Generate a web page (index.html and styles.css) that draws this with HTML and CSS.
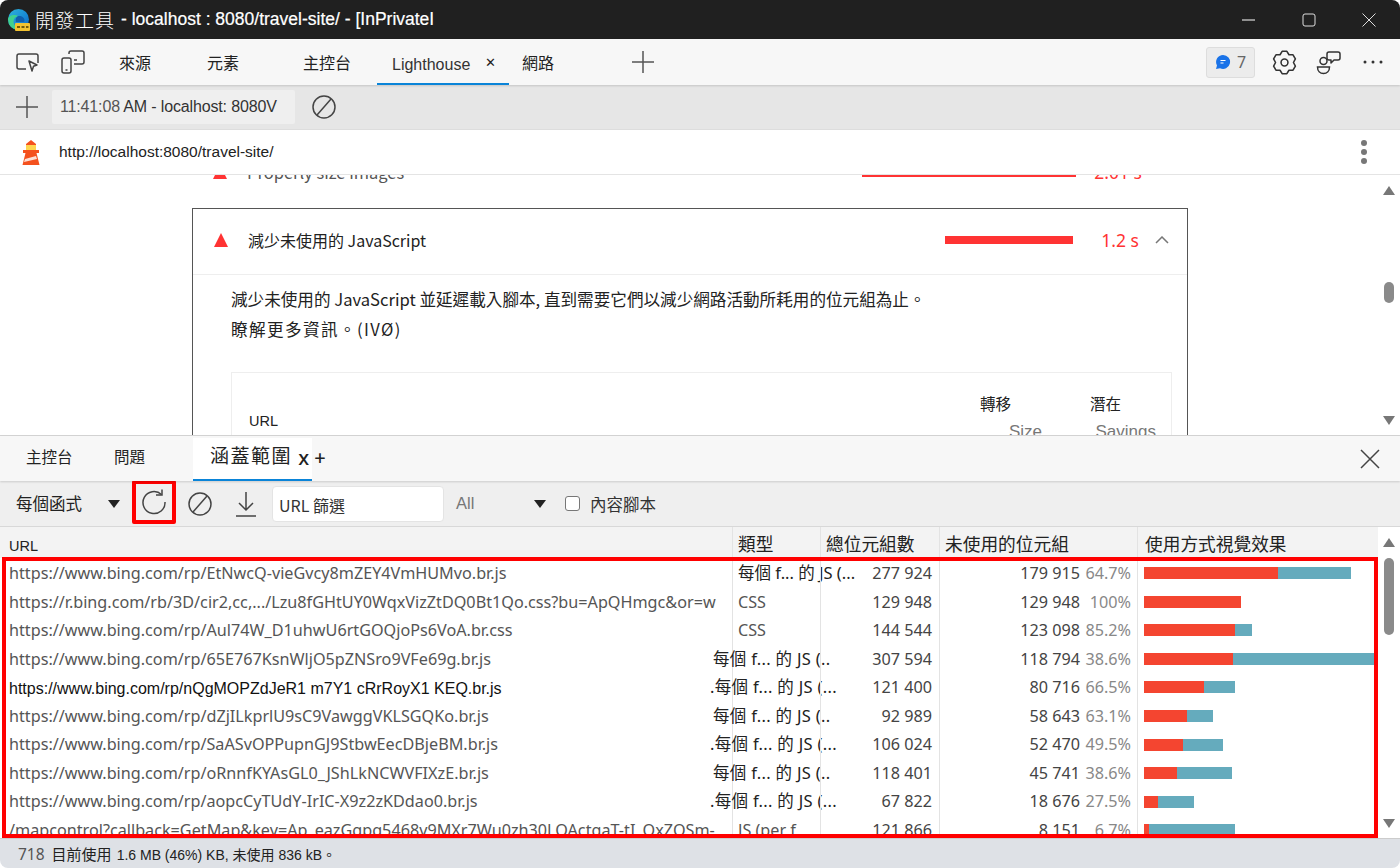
FILE: index.html
```html
<!DOCTYPE html>
<html lang="zh-Hant">
<head>
  <meta charset="UTF-8">
  <title>開發工具 - localhost:8080/travel-site/ - [InPrivate]</title>
  <link rel="stylesheet" href="styles.css">
</head>
<body>
  <div class="window">
    <header class="titlebar">
      <svg class="edge-logo" width="24" height="24" viewBox="0 0 24 24">
        <defs>
          <linearGradient id="edgeGrad" x1="0" y1="0" x2="1" y2="1">
            <stop offset="0" stop-color="#2fb6d8"/>
            <stop offset="0.6" stop-color="#1787d6"/>
            <stop offset="1" stop-color="#0f5fae"/>
          </linearGradient>
        </defs>
        <circle cx="11.500" cy="11.500" r="10.500" fill="url(#edgeGrad)"/>
        <path d="M1 11.500A10.500 10.500 0 0 0 11.500 22c2 0 3.500-.5 4.500-1-5.500 0-9.500-3-9.500-7.500 0-3 2-5 5-5.500-5-2.500-10.500 0-10.500 3.500z" fill="#3fd08f"/>
        <path d="M11.500 8c3-.5 6 1.500 6 4.500 0 1-.5 1.500-1.500 1.500H9c-1-3 .5-5.500 2.500-6z" fill="#0f5fae"/>
        <rect x="8" y="15" width="15" height="8" rx="1" fill="#f2c230"/>
        <path d="M10 19h3M14.500 19h3M19 19h2.500" stroke="#4a3a00" stroke-width="1.500"/>
      </svg>
      <span class="title-cjk">開發工具</span>
      <span class="title-text">- localhost : 8080/travel-site/ - [InPrivateI</span>
      <div class="window-controls">
        <svg width="14" height="14" viewBox="0 0 14 14"><path d="M0 7h13" stroke="#fff"/></svg>
        <svg width="14" height="14" viewBox="0 0 14 14"><rect x="1" y="1" width="12" height="12" rx="2" fill="none" stroke="#ddd"/></svg>
        <svg width="14" height="14" viewBox="0 0 14 14"><path d="M0.500 0.500l13 13M13.500 0.500l-13 13" stroke="#ddd"/></svg>
      </div>
    </header>

    <nav class="tabbar">
      <svg class="tool-icon first-icon" width="26" height="26" viewBox="0 0 26 26" fill="none" stroke="#444" stroke-width="1.500">
        <path d="M11 20H4a2 2 0 0 1-2-2V7a2 2 0 0 1 2-2h17a2 2 0 0 1 2 2v7"/>
        <path d="M14 12l8 4-3.500 1.300L17 22z" stroke-linejoin="round"/>
      </svg>
      <svg class="tool-icon device-icon" width="26" height="26" viewBox="0 0 26 26" fill="none" stroke="#444" stroke-width="1.500">
        <path d="M9 5V4a2 2 0 0 1 2-2h11a2 2 0 0 1 2 2v9a2 2 0 0 1-2 2h-8"/>
        <rect x="2" y="9" width="9" height="15" rx="2"/>
        <path d="M5.500 21h2M14 11h3"/>
      </svg>
      <span class="tab tab-sources">來源</span>
      <span class="tab tab-elements">元素</span>
      <span class="tab tab-console">主控台</span>
      <span class="tab tab-active">Lighthouse<span class="tab-close">✕</span></span>
      <span class="tab tab-network">網路</span>
      <svg class="tab-add" width="22" height="22" viewBox="0 0 22 22"><path d="M11 0v22M0 11h22" stroke="#555" stroke-width="1.500"/></svg>
      <div class="tabbar-right">
        <span class="msg-badge">
          <svg width="16" height="16" viewBox="0 0 16 16">
            <path d="M8 1a7 7 0 1 1-3 13.300L1 15l1-3.500A7 7 0 0 1 8 1z" fill="#1a73e8"/>
            <path d="M5.500 6.500h5M5.500 9h3" stroke="#fff" stroke-width="1.200"/>
          </svg>
          7
        </span>
        <svg class="gear-icon" width="25" height="25" viewBox="0 0 24 24" fill="none" stroke="#333" stroke-width="1.500">
          <polygon stroke-linejoin="round" points="9.710,1.240 14.290,1.240 16.300,4.550 20.170,4.640 22.460,8.600 20.600,12 22.460,15.400 20.170,19.360 16.300,19.450 14.290,22.760 9.710,22.760 7.700,19.450 3.830,19.360 1.540,15.400 3.400,12 1.540,8.600 3.830,4.640 7.700,4.550"/>
          <circle cx="12" cy="12" r="3.300"/>
        </svg>
        <svg width="25" height="25" viewBox="0 0 25 25" fill="none" stroke="#333" stroke-width="1.500">
          <circle cx="7.500" cy="11" r="3.500"/>
          <path d="M1.500 17h12c0 4-2.500 6.500-6 6.500s-6-2.500-6-6.500z"/>
          <path d="M13 2h9a2 2 0 0 1 2 2v4a2 2 0 0 1-2 2h-4l-3 3v-3h-2a2 2 0 0 1-2-2V4a2 2 0 0 1 2-2z" stroke-linejoin="round"/>
        </svg>
        <svg width="22" height="6" viewBox="0 0 22 6"><circle cx="3" cy="3" r="1.500" fill="#333"/><circle cx="11" cy="3" r="1.500" fill="#333"/><circle cx="19" cy="3" r="1.500" fill="#333"/></svg>
      </div>
    </nav>

    <div class="report-bar">
      <svg width="22" height="22" viewBox="0 0 22 22"><path d="M11 0v22M0 11h22" stroke="#555" stroke-width="1.500"/></svg>
      <div class="report-select"><span class="report-time">11:41:08</span> AM - localhost: 8080V</div>
      <svg class="clear-icon" width="24" height="24" viewBox="0 0 24 24" fill="none" stroke="#444" stroke-width="1.500"><circle cx="12" cy="12" r="11"/><path d="M5 20L19 4"/></svg>
    </div>

    <div class="url-bar">
      <svg width="20" height="26" viewBox="0 0 20 26">
        <path d="M5 5l5-4 5 4v1H5z" fill="#f4511e"/>
        <rect x="5" y="6" width="10" height="5" fill="#ffd54f"/>
        <rect x="2" y="11" width="16" height="3" fill="#f4511e"/>
        <path d="M4.500 14h11l3 12h-17z" fill="#f4511e"/>
        <path d="M4 20l11-3 1 3-13 3z" fill="#fde0d6"/>
      </svg>
      <span class="url-text">http://localhost:8080/travel-site/</span>
      <span class="kebab"><i></i><i></i><i></i></span>
    </div>

    <section class="report-area">
      <div class="report-scroll">
        <div class="audit-row audit-clipped">
          <span class="tri"></span>
          <span class="audit-name">Properly size images</span>
          <span class="audit-bar audit-bar-thin"></span>
          <span class="audit-time">2.01 s</span>
          <svg class="chevron" width="12" height="8" viewBox="0 0 12 8"><path d="M1 1l5 5 5-5" fill="none" stroke="#777" stroke-width="1.500"/></svg>
        </div>
        <div class="audit-card">
          <div class="audit-row audit-head">
            <span class="tri"></span>
            <span class="audit-name">減少未使用的 JavaScript</span>
            <span class="audit-bar"></span>
            <span class="audit-time">1.2 s</span>
            <svg class="chevron" width="14" height="8" viewBox="0 0 14 8"><path d="M1 7l6-6 6 6" fill="none" stroke="#777" stroke-width="1.500"/></svg>
          </div>
          <div class="audit-body">
            <p class="audit-desc">減少未使用的 JavaScript 並延遲載入腳本, 直到需要它們以減少網路活動所耗用的位元組為止。</p>
            <p class="audit-desc audit-more">瞭解更多資訊。(IVØ)</p>
            <div class="audit-table">
              <span class="at-url">URL</span>
              <span class="at-col at-transfer">轉移<em>Size</em></span>
              <span class="at-col at-savings">潛在<em>Savings</em></span>
            </div>
          </div>
        </div>
      </div>
      <div class="scrollbar">
        <span class="arrow-up"></span>
        <span class="thumb thumb-report"></span>
        <span class="arrow-down"></span>
      </div>
    </section>

    <section class="drawer">
      <div class="drawer-tabs">
        <span class="dtab dtab-console">主控台</span>
        <span class="dtab dtab-issues">問題</span>
        <span class="dtab-active"><span class="dtab-title">涵蓋範圍</span> <span class="dtab-extra">x +</span></span>
        <svg class="drawer-close" width="20" height="20" viewBox="0 0 20 20"><path d="M1 1l18 18M19 1L1 19" stroke="#444" stroke-width="1.500"/></svg>
      </div>

      <div class="coverage-toolbar">
        <span class="per-func">每個函式</span>
        <span class="caret caret-func"></span>
        <span class="reload-btn">
          <svg width="26" height="26" viewBox="0 0 26 26" fill="none" stroke="#444" stroke-width="1.500"><path d="M20.500 5.500A11 11 0 1 0 24 13"/><path d="M21 0.500v5.500h-6"/></svg>
        </span>
        <svg class="clear-icon-sm" width="24" height="24" viewBox="0 0 24 24" fill="none" stroke="#444" stroke-width="1.500"><circle cx="12" cy="12" r="11"/><path d="M5 20L19 4"/></svg>
        <svg class="download-icon" width="20" height="26" viewBox="0 0 20 26" fill="none" stroke="#444" stroke-width="1.500"><path d="M10 1v18M3 12l7 7 7-7M0 25h20"/></svg>
        <span class="filter-input">URL 篩選</span>
        <span class="all-select">All</span>
        <span class="caret caret-all"></span>
        <span class="checkbox"></span>
        <span class="content-scripts">內容腳本</span>
      </div>

      <div class="coverage">
        <div class="coverage-main">
          <div class="cov-row cov-header">
            <div class="cell">URL</div>
            <div class="cell cjk-head">類型</div>
            <div class="cell cjk-head">總位元組數</div>
            <div class="cell cjk-head">未使用的位元組</div>
            <div class="cell cjk-head viz-head">使用方式視覺效果</div>
          </div>
          <div class="cov-body">
            <div class="cov-row">
              <div class="cell url">https://www.bing.com/rp/EtNwcQ-vieGvcy8mZEY4VmHUMvo.br.js</div>
              <div class="cell type">每個 f... 的 JS (...</div>
              <div class="cell num">277 924</div>
              <div class="cell unused">179 915<span class="pct">64.7%</span></div>
              <div class="cell viz"><span class="bar-used" style="width:134px"></span><span class="bar-rest" style="width:73px"></span></div>
            </div>
            <div class="cov-row">
              <div class="cell url">https://r.bing.com/rb/3D/cir2,cc,.../Lzu8fGHtUY0WqxVizZtDQ0Bt1Qo.css?bu=ApQHmgc&amp;or=w</div>
              <div class="cell type type-plain">CSS</div>
              <div class="cell num">129 948</div>
              <div class="cell unused">129 948<span class="pct">100%</span></div>
              <div class="cell viz"><span class="bar-used" style="width:97px"></span></div>
            </div>
            <div class="cov-row">
              <div class="cell url">https://www.bing.com/rp/Aul74W_D1uhwU6rtGOQjoPs6VoA.br.css</div>
              <div class="cell type type-plain">CSS</div>
              <div class="cell num">144 544</div>
              <div class="cell unused">123 098<span class="pct">85.2%</span></div>
              <div class="cell viz"><span class="bar-used" style="width:91px"></span><span class="bar-rest" style="width:17px"></span></div>
            </div>
            <div class="cov-row">
              <div class="cell url">https://www.bing.com/rp/65E767KsnWljO5pZNSro9VFe69g.br.js</div>
              <div class="cell type type-shift">每個 f... 的 JS (..</div>
              <div class="cell num">307 594</div>
              <div class="cell unused">118 794<span class="pct">38.6%</span></div>
              <div class="cell viz"><span class="bar-used" style="width:89px"></span><span class="bar-rest" style="width:141px"></span></div>
            </div>
            <div class="cov-row">
              <div class="cell url url-dark">https://www.bing.com/rp/nQgMOPZdJeR1 m7Y1 cRrRoyX1 KEQ.br.js</div>
              <div class="cell type type-dot">.每個 f... 的 JS (...</div>
              <div class="cell num">121 400</div>
              <div class="cell unused">80 716<span class="pct">66.5%</span></div>
              <div class="cell viz"><span class="bar-used" style="width:60px"></span><span class="bar-rest" style="width:31px"></span></div>
            </div>
            <div class="cov-row">
              <div class="cell url">https://www.bing.com/rp/dZjILkprlU9sC9VawggVKLSGQKo.br.js</div>
              <div class="cell type type-shift">每個 f... 的 JS (..</div>
              <div class="cell num">92 989</div>
              <div class="cell unused">58 643<span class="pct">63.1%</span></div>
              <div class="cell viz"><span class="bar-used" style="width:43px"></span><span class="bar-rest" style="width:26px"></span></div>
            </div>
            <div class="cov-row">
              <div class="cell url">https://www.bing.com/rp/SaASvOPPupnGJ9StbwEecDBjeBM.br.js</div>
              <div class="cell type type-dot">.每個 f... 的 JS (...</div>
              <div class="cell num">106 024</div>
              <div class="cell unused">52 470<span class="pct">49.5%</span></div>
              <div class="cell viz"><span class="bar-used" style="width:39px"></span><span class="bar-rest" style="width:40px"></span></div>
            </div>
            <div class="cov-row">
              <div class="cell url">https://www.bing.com/rp/oRnnfKYAsGL0_JShLkNCWVFIXzE.br.js</div>
              <div class="cell type type-shift">每個 f... 的 JS (..</div>
              <div class="cell num">118 401</div>
              <div class="cell unused">45 741<span class="pct">38.6%</span></div>
              <div class="cell viz"><span class="bar-used" style="width:33px"></span><span class="bar-rest" style="width:55px"></span></div>
            </div>
            <div class="cov-row">
              <div class="cell url">https://www.bing.com/rp/aopcCyTUdY-IrIC-X9z2zKDdao0.br.js</div>
              <div class="cell type type-dot">.每個 f... 的 JS (...</div>
              <div class="cell num">67 822</div>
              <div class="cell unused">18 676<span class="pct">27.5%</span></div>
              <div class="cell viz"><span class="bar-used" style="width:14px"></span><span class="bar-rest" style="width:36px"></span></div>
            </div>
            <div class="cov-row">
              <div class="cell url">/mapcontrol?callback=GetMap&amp;key=Ap_eazGgpq5468v9MXr7Wu0zh30LQActgaT-tI_OxZQSm-</div>
              <div class="cell type type-plain">JS (per f</div>
              <div class="cell num">121 866</div>
              <div class="cell unused">8 151<span class="pct">6.7%</span></div>
              <div class="cell viz"><span class="bar-used" style="width:5px"></span><span class="bar-rest" style="width:86px"></span></div>
            </div>
          </div>
          <div class="red-frame"></div>
        </div>
        <div class="scrollbar scrollbar-cov">
          <span class="arrow-up"></span>
          <span class="thumb thumb-cov"></span>
          <span class="arrow-down"></span>
        </div>
      </div>

      <footer class="statusbar">
        <span class="status-count">718</span>
        <span class="status-cjk">目前使用</span>
        <span class="status-small">1.6 MB (46%) KB, 未使用 836 kB。</span>
      </footer>
    </section>
  </div>
</body>
</html>
```

FILE: styles.css
```css
* {
  box-sizing: border-box;
}
body {
  margin: 0;
  background: #fff;
  font-family: "Noto Sans", "Noto Sans CJK TC", sans-serif;
  color: #222;
  overflow: hidden;
}
.window {
  width: 1400px;
  height: 868px;
  display: flex;
  flex-direction: column;
  border-radius: 8px;
  overflow: hidden;
  background: #fff;
}

/* title bar */
.titlebar {
  height: 39px;
  flex: none;
  background: #202020;
  color: #fff;
  display: flex;
  align-items: center;
  padding-left: 7px;
}
.edge-logo {
  flex: none;
  margin-right: 4px;
}
.title-cjk {
  font-family: "Noto Sans CJK TC", sans-serif;
  font-size: 19px;
  letter-spacing: 1px;
  margin-right: 6px;
  font-weight: 300;
}
.title-text {
  font-family: "Liberation Sans", sans-serif;
  font-size: 17.500px;
  -webkit-text-stroke: 0.2px #fff;
}
.window-controls {
  margin-left: auto;
  display: flex;
  gap: 46px;
  padding-right: 24px;
}

/* main tabs */
.tabbar {
  height: 46px;
  flex: none;
  background: #f7f7f7;
  display: flex;
  align-items: center;
  box-shadow: 0 1px 2px rgba(0, 0, 0, 0.15);
  position: relative;
  font-size: 15.500px;
}
.first-icon {
  margin-left: 15px;
}
.device-icon {
  margin-left: 19px;
}
.tab {
  font-family: "Noto Sans CJK TC", sans-serif;
  font-size: 16px;
  flex: none;
  margin-top: -1px;
}
.tab-sources {
  margin-left: 33px;
  width: 88px;
}
.tab-elements {
  width: 96px;
}
.tab-console {
  width: 74px;
}
.tab-active {
  width: 132px;
  height: 46px;
  margin-top: 0;
  padding: 17px 0 0 15px;
  border-bottom: 2px solid #0a84d8;
  font-family: "Liberation Sans", sans-serif;
  color: #333;
}
.tab-close {
  font-size: 13px;
  margin-left: 15px;
  position: relative;
  top: -3px;
  color: #222;
}
.tab-network {
  margin-left: 13px;
  width: 110px;
}
.tab-add {
  flex: none;
}
.tabbar-right {
  margin-left: auto;
  display: flex;
  align-items: center;
  gap: 21px;
  padding-right: 16px;
}
.msg-badge {
  width: 49px;
  height: 31px;
  background: #ececec;
  border: 1px solid #ddd;
  border-radius: 3px;
  display: flex;
  align-items: center;
  justify-content: center;
  gap: 6px;
  color: #666;
  font-size: 16px;
  margin-right: -4px;
}
.gear-icon {
  margin-right: -2px;
}

/* report selector */
.report-bar {
  height: 45px;
  flex: none;
  background: #e6e6e6;
  border-bottom: 1px solid #ddd;
  display: flex;
  align-items: center;
  padding-left: 16px;
}
.report-select {
  margin-left: 14px;
  width: 243px;
  height: 34px;
  background: #efefef;
  border-radius: 2px;
  padding: 0 8px;
  line-height: 34px;
  font-family: "Liberation Sans", sans-serif;
  font-size: 16px;
  letter-spacing: -0.15px;
  color: #333;
  white-space: nowrap;
}
.report-time {
  color: #555;
}
.clear-icon {
  margin-left: 17px;
}
.url-bar {
  height: 45px;
  flex: none;
  background: #fff;
  border-bottom: 1px solid #e4e4e4;
  display: flex;
  align-items: center;
  padding-left: 21px;
}
.url-text {
  margin-left: 18px;
  font-family: "Liberation Sans", sans-serif;
  font-size: 15.500px;
  color: #222;
}
.kebab {
  margin-left: auto;
  margin-right: 33px;
  display: flex;
  flex-direction: column;
  gap: 3px;
}
.kebab i {
  width: 6px;
  height: 6px;
  border-radius: 50%;
  background: #777;
}

/* lighthouse report */
.report-area {
  height: 260px;
  flex: none;
  display: flex;
  overflow: hidden;
}
.report-scroll {
  flex: 1;
  padding-left: 192px;
  padding-right: 190px;
  overflow: hidden;
}
.audit-row {
  display: flex;
  align-items: center;
  height: 66px;
  padding-left: 21px;
  font-size: 16px;
}
.audit-clipped {
  margin-top: -39px;
  color: #555;
  height: 72px;
  font-size: 16.500px;
}
.tri {
  width: 0;
  height: 0;
  border-left: 7.500px solid transparent;
  border-right: 7.500px solid transparent;
  border-bottom: 14px solid #ff3333;
  flex: none;
}
.audit-name {
  margin-left: 20px;
  font-family: "Noto Sans CJK TC", sans-serif;
}
.audit-bar {
  margin-left: auto;
  width: 128px;
  height: 8px;
  background: #ff3333;
}
.audit-bar-thin {
  width: 214px;
  height: 2px;
  margin-top: 8px;
}
.audit-time {
  width: 66px;
  text-align: right;
  color: #ff3333;
  font-size: 17.500px;
}
.chevron {
  margin-left: 16px;
  margin-right: 18px;
}
.audit-card {
  border: 1px solid #555;
  height: 300px;
}
.audit-head {
  border-bottom: 1px solid #eee;
  padding-bottom: 4px;
}
.audit-body {
  padding: 9px 15px 0 38px;
}
.audit-desc {
  margin: 0;
  height: 30px;
  line-height: 30px;
  font-family: "Noto Sans CJK TC", "Noto Sans", sans-serif;
  font-size: 16.600px;
  color: #222;
  white-space: nowrap;
}
.audit-more {
  letter-spacing: 1.400px;
}
.audit-table {
  margin-top: 28px;
  height: 120px;
  border: 1px solid #eee;
  position: relative;
}
.at-url {
  position: absolute;
  left: 17px;
  top: 40px;
  font-family: "Liberation Sans", sans-serif;
  font-size: 14.500px;
}
.at-col {
  position: absolute;
  top: 19px;
  font-family: "Noto Sans CJK TC", sans-serif;
  font-size: 15.500px;
}
.at-col em {
  display: block;
  font-style: normal;
  font-family: "Liberation Sans", sans-serif;
  color: #777;
  text-align: right;
  margin-top: 8px;
  font-size: 17px;
}
.at-transfer {
  left: 748px;
  width: 62px;
}
.at-savings {
  left: 858px;
  width: 66px;
}

/* scrollbars */
.scrollbar {
  width: 22px;
  flex: none;
  display: flex;
  flex-direction: column;
  align-items: center;
  position: relative;
  background: #fff;
}
.arrow-up {
  margin-top: 11px;
  border-left: 6px solid transparent;
  border-right: 6px solid transparent;
  border-bottom: 9px solid #777;
}
.arrow-down {
  margin-top: auto;
  margin-bottom: 10px;
  border-left: 6px solid transparent;
  border-right: 6px solid transparent;
  border-top: 9px solid #777;
}
.thumb {
  width: 10px;
  border-radius: 5px;
  background: #8a8a8a;
}
.thumb-report {
  height: 21px;
  margin-top: 87px;
}
.thumb-cov {
  height: 77px;
  margin-top: 11px;
}

/* drawer */
.drawer {
  flex: 1;
  display: flex;
  flex-direction: column;
  min-height: 0;
  border-top: 1px solid #d4d4d4;
}
.drawer-tabs {
  height: 45px;
  flex: none;
  background: #f7f7f7;
  display: flex;
  align-items: center;
  box-shadow: 0 1px 2px rgba(0, 0, 0, 0.15);
  position: relative;
}
.dtab {
  font-family: "Noto Sans CJK TC", sans-serif;
  font-size: 15.500px;
  flex: none;
  margin-top: -5px;
}
.dtab-console {
  margin-left: 26px;
  width: 88px;
}
.dtab-issues {
  width: 79px;
}
.dtab-active {
  width: 119px;
  height: 43px;
  margin-top: 2px;
  padding: 3px 0 0 17px;
  background: #fff;
  border-bottom: 2px solid #0a84d8;
  white-space: nowrap;
}
.dtab-title {
  font-family: "Noto Sans CJK TC", sans-serif;
  font-size: 19px;
  letter-spacing: 1.500px;
}
.dtab-extra {
  margin-left: 2px;
  font-size: 20px;
  font-weight: 500;
  position: relative;
  top: 2px;
}
.drawer-close {
  margin-left: auto;
  margin-right: 20px;
}
.coverage-toolbar {
  height: 46px;
  flex: none;
  background: #efefef;
  display: flex;
  align-items: center;
  padding-left: 16px;
  border-bottom: 1px solid #d8d8d8;
  font-family: "Noto Sans CJK TC", sans-serif;
  font-size: 16.500px;
}
.per-func {
  width: 92px;
  margin-top: -2px;
}
.caret {
  border-left: 6.500px solid transparent;
  border-right: 6.500px solid transparent;
  border-top: 8px solid #222;
  flex: none;
}
.reload-btn {
  width: 44px;
  height: 44px;
  margin-left: 12px;
  margin-bottom: 4px;
  border: 4px solid #f00;
  border-radius: 2px;
  display: flex;
  align-items: center;
  justify-content: center;
  flex: none;
}
.clear-icon-sm {
  margin-left: 12px;
}
.download-icon {
  margin-left: 24px;
}
.filter-input {
  width: 172px;
  height: 36px;
  margin-left: 16px;
  background: #fff;
  border: 1px solid #e4e4e4;
  border-radius: 4px;
  padding-left: 6px;
  line-height: 36px;
  font-size: 16px;
  color: #333;
}
.all-select {
  margin-left: 12px;
  width: 78px;
  color: #777;
  font-family: "Liberation Sans", sans-serif;
  font-size: 16.500px;
}
.checkbox {
  width: 15px;
  height: 15px;
  margin-left: 19px;
  background: #fff;
  border: 1px solid #777;
  border-radius: 3px;
  flex: none;
}
.content-scripts {
  margin-left: 10px;
  color: #333;
}

/* coverage table */
.coverage {
  flex: 1;
  min-height: 0;
  display: flex;
  overflow: hidden;
  border-bottom: 1px solid #ccc;
}
.coverage-main {
  width: 1378px;
  flex: none;
  position: relative;
  overflow: hidden;
  display: flex;
  flex-direction: column;
}
.cov-row {
  display: grid;
  grid-template-columns: 732px 88px 119px 198px 241px;
  height: 28.550px;
  align-items: stretch;
}
.cov-header {
  height: 31px;
  flex: none;
  background: #f3f3f3;
}
.cov-body {
  flex: 1;
  overflow: hidden;
  padding-top: 1px;
}
.cell {
  border-left: 1px solid #e3e3e3;
  padding-left: 5px;
  white-space: nowrap;
  font-size: 16.200px;
  line-height: 28.550px;
  min-width: 0;
}
.cell:first-child {
  border-left: none;
  padding-left: 9px;
}
.cov-header .cell {
  line-height: 38px;
  font-family: "Liberation Sans", sans-serif;
  font-size: 14.500px;
}
.cov-header .cjk-head {
  font-family: "Noto Sans CJK TC", sans-serif;
  font-size: 17.700px;
  line-height: 32px;
}
.cov-header .viz-head {
  padding-left: 7px;
}
.url {
  color: #555;
  overflow: hidden;
  padding-right: 5px;
}
.url-dark {
  font-family: "Liberation Sans", sans-serif;
  color: #111;
  font-size: 16px;
  padding-top: 2px;
}
.type {
  font-family: "Noto Sans", "Noto Sans CJK TC", sans-serif;
  color: #222;
  font-size: 16.500px;
}
.type-plain {
  color: #555;
  font-size: 16.200px;
  overflow: hidden;
}
.type-shift {
  text-indent: -25px;
  letter-spacing: 0.3px;
}
.type-dot {
  text-indent: -28px;
  letter-spacing: 0.3px;
}
.num {
  text-align: right;
  padding-right: 7px;
  color: #444;
}
.unused {
  text-align: right;
  padding-right: 6px;
  color: #444;
}
.pct {
  display: inline-block;
  width: 51px;
  color: #888;
}
.viz {
  display: flex;
  align-items: center;
  padding-left: 6px;
}
.bar-used,
.bar-rest {
  height: 12px;
  flex: none;
}
.bar-used {
  background: #f44530;
}
.bar-rest {
  background: #65abbd;
}
.red-frame {
  position: absolute;
  left: 2px;
  right: 0;
  top: 30px;
  bottom: 0;
  border: 4px solid #f00;
  pointer-events: none;
}
.statusbar {
  height: 29px;
  flex: none;
  background: #dee1e6;
  display: flex;
  align-items: center;
  padding-left: 18px;
}
.status-count {
  color: #555;
  font-size: 15.500px;
}
.status-cjk {
  margin-left: 7px;
  font-family: "Noto Sans CJK TC", sans-serif;
  font-size: 15px;
}
.status-small {
  margin-left: 5px;
  font-family: "Liberation Sans", "Noto Sans CJK TC", sans-serif;
  font-size: 14px;
}
```
